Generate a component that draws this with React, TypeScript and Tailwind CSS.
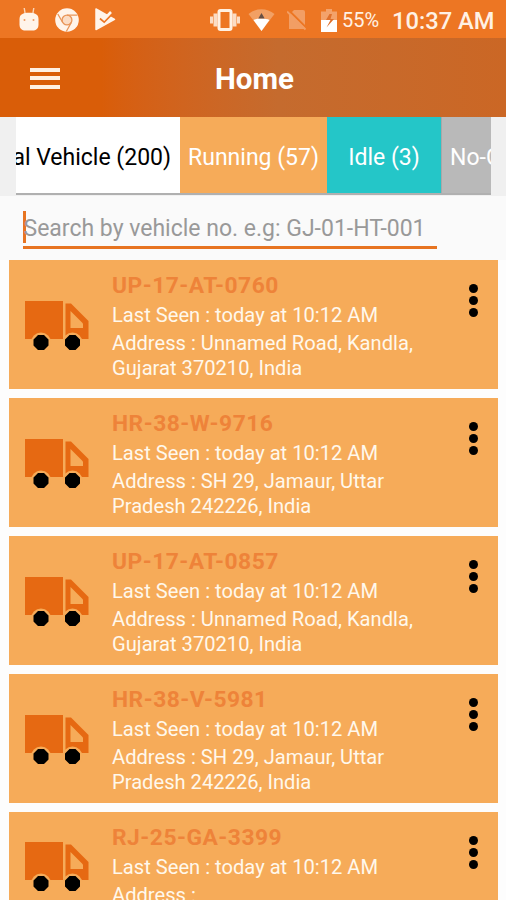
type Vehicle = { id: string; address: string[] };

const vehicles: Vehicle[] = [
  { id: "UP-17-AT-0760", address: ["Address : Unnamed Road, Kandla,", "Gujarat 370210, India"] },
  { id: "HR-38-W-9716", address: ["Address : SH 29, Jamaur, Uttar", "Pradesh 242226, India"] },
  { id: "UP-17-AT-0857", address: ["Address : Unnamed Road, Kandla,", "Gujarat 370210, India"] },
  { id: "HR-38-V-5981", address: ["Address : SH 29, Jamaur, Uttar", "Pradesh 242226, India"] },
  { id: "RJ-25-GA-3399", address: ["Address :"] },
];

function AndroidIcon() {
  return (
    <svg width="20" height="24" viewBox="0 0 20 24" className="ml-[19px] shrink-0" fill="#fff4ea">
      <path d="M5.200 0 6.200 6M14.800 0 13.800 6" stroke="#fbd5b7" strokeWidth="1.400" />
      <path d="M.5 11C.5 6.500 4 4.800 10 4.800S19.500 6.500 19.500 11v5.500c0 4-2.500 6-6 6h-7c-3.500 0-6-2-6-6z" />
      <circle cx="5.500" cy="12" r="1" fill="#ed9a62" />
      <circle cx="14.500" cy="12" r="1" fill="#ed9a62" />
    </svg>
  );
}

function ChromeIcon() {
  return (
    <svg width="24" height="24" viewBox="0 0 24 24" className="ml-4 shrink-0">
      <circle cx="12" cy="12" r="11.800" fill="#fff4ea" />
      <circle cx="12" cy="12" r="4.900" fill="#fbdcc4" stroke="#e99558" strokeWidth="1.300" />
      <path d="M12 7.100h10.500M7.700 14.500 2.800 6M16.300 14.500 11.300 23.500" stroke="#e99558" strokeWidth="1.300" fill="none" />
    </svg>
  );
}

function PlayCheckIcon() {
  return (
    <svg width="21" height="23" viewBox="0 0 21 23" className="ml-4 shrink-0">
      <path d="M1 1 19.500 11.300 1 21.500z" fill="#fff4ea" stroke="#fff4ea" strokeWidth="1.500" strokeLinejoin="round" />
      <path d="m5 10.500 4.200 3.500L19 4" fill="none" stroke="#ed7623" strokeWidth="2" />
      <path d="m6 8 3.200 3.200L16 4" fill="none" stroke="#fff4ea" strokeWidth="2.600" />
    </svg>
  );
}

function VibrateIcon() {
  return (
    <svg width="30" height="24" viewBox="0 0 30 24" className="ml-[95px] shrink-0">
      <path d="M0 8.500h3v7H0zM3.500 5.500h4v13h-4zM22.500 5.500h4v13h-4zM27 8.500h3v7h-3z" fill="#fbdcc4" />
      <rect x="9" y="2.500" width="12" height="19" rx="1.500" fill="#ed7623" stroke="#fff0e2" strokeWidth="3" />
    </svg>
  );
}

function WifiIcon() {
  return (
    <svg width="27" height="23" viewBox="0 0 27 23" className="ml-[38px] shrink-0">
      <path d="M.5 5C8-1.400 19-1.400 26.500 5L13.500 22z" fill="#f2a064" />
      <path d="M5.500 11c4-2 12-2 16 0L13.500 22z" fill="#fff" />
      <path d="m13.500 4 3.200 5.500h-6.400z" fill="#685044" />
    </svg>
  );
}

function NoSimIcon() {
  return (
    <svg width="20" height="22" viewBox="0 0 20 22" className="ml-3 shrink-0">
      <path d="M7 1h9q2 0 2 2v17H2V6z" fill="#f29e64" />
      <path d="m1.500 1 18 18" stroke="#ed7623" strokeWidth="2" />
      <path d="m0 2.500 18.500 18" stroke="#f29e64" strokeWidth="1.800" />
    </svg>
  );
}

function BatteryIcon() {
  return (
    <svg width="16" height="23" viewBox="0 0 16 23" className="ml-[14px] shrink-0">
      <path d="M5 0h6v2.500h5V12H0V2.500h5z" fill="#f3a26b" />
      <path d="M0 11h16v12H0z" fill="#fff" />
      <path d="M8.500 5 5 11h4.500L5.500 18.500 13 10H9.500L11 5z" fill="#df702b" />
    </svg>
  );
}

function StatusBar() {
  return (
    <header className="flex h-[38px] bg-[#ed7623] text-[#fff1e4]">
      <div className="flex h-[39px] w-[210px] shrink-0 items-center">
        <AndroidIcon />
        <ChromeIcon />
        <PlayCheckIcon />
      </div>
      <div className="-ml-[95px] flex h-[40px] shrink-0 items-center">
        <VibrateIcon />
        <div className="-ml-[30px] flex items-center">
          <WifiIcon />
          <NoSimIcon />
          <BatteryIcon />
        </div>
      </div>
      <span className="ml-[5px] w-[50px] shrink-0 text-[20px] leading-[40px] whitespace-nowrap">55%</span>
      <span className="text-[23.7px] leading-[43px] font-medium whitespace-nowrap">10:37 AM</span>
    </header>
  );
}

function Toolbar() {
  return (
    <div className="flex h-[79px] items-center bg-linear-to-r from-[#d95d08] from-20% via-[#c56b2e] via-55% to-[#cb6725] pt-px">
      <div className="ml-[30px] flex w-[185px] shrink-0 flex-col gap-[4.500px]">
        <span className="h-1 w-[30px] bg-[#fff0e2]" />
        <span className="h-1 w-[30px] bg-[#fff0e2]" />
        <span className="h-1 w-[30px] bg-[#fff0e2]" />
      </div>
      <h1 className="pt-[2px] text-[29.500px] leading-8 font-bold text-white">Home</h1>
    </div>
  );
}

function Tabs() {
  return (
    <nav className="flex h-[79px] bg-[#f0f0f0] px-4 text-[23px] leading-[81px] whitespace-nowrap text-white">
      <div className="flex h-[78px] w-[475px] shrink-0 overflow-hidden border-b-2 border-[#b0b0b0]">
        <div className="flex w-[164px] shrink-0 justify-end overflow-hidden bg-white pr-[9px] text-black">Total Vehicle (200)</div>
        <div className="w-[147px] shrink-0 bg-[#f6ab59] text-center">Running (57)</div>
        <div className="w-[114px] shrink-0 bg-[#24c6c8] text-center">Idle (3)</div>
        <div className="w-[130px] shrink-0 border-l border-[#a8a8a8] bg-[#b9b9b9] pl-2">No-Comm</div>
      </div>
    </nav>
  );
}

function SearchField() {
  return (
    <div className="h-[64px] bg-[#fafafa] pt-[13px] pl-[23px]">
      <div className="flex h-[40px] w-[414px] border-b-[3px] border-[#e77421] text-[23px] leading-[40px] whitespace-nowrap text-[#999]">
        <span className="mt-[2px] h-[32px] w-[2.500px] shrink-0 bg-[#e77421]" />
        <span className="-ml-[2px]">Search by vehicle no. e.g: GJ-01-HT-001</span>
      </div>
    </div>
  );
}

function TruckIcon() {
  return (
    <svg width="64" height="52" viewBox="0 0 64 52" className="shrink-0">
      <path d="M0 1h38v38H0zM40.500 3.500H46L63.500 21v18h-23z" fill="#e66912" />
      <path d="M45.500 11 58 23.500v4.500H45.500z" fill="#f6ab59" />
      <circle cx="16" cy="42.500" r="10" fill="#f6ab59" />
      <circle cx="47.500" cy="42.500" r="10" fill="#f6ab59" />
      <path d="M13 35h6l4.500 4.500v6L19 50h-6l-4.500-4.500v-6zM44.500 35h6l4.500 4.500v6L50.500 50h-6L40 45.500v-6z" />
    </svg>
  );
}

function VehicleCard({ vehicle }: { vehicle: Vehicle }) {
  const height = vehicle.address.length > 1 ? "h-[129px]" : "h-[107px]";
  return (
    <article className={`flex shrink-0 bg-[#f6ab59] ${height}`}>
      <div className="flex w-[103px] shrink-0 items-center pt-[3px] pl-4"><TruckIcon /></div>
      <div className="w-[357px] shrink-0 pt-[13px] whitespace-nowrap text-[#fff8ec]">
        <h2 className="text-[22.800px] leading-[26px] font-bold tracking-[0.5px] text-[#ee8339]">{vehicle.id}</h2>
        <p className="mt-[4px] text-[20.150px] leading-6">Last Seen : today at 10:12 AM</p>
        <div className="mt-[4px] text-[20.150px] leading-[24.500px]">
          {vehicle.address.map((line) => <p key={line}>{line}</p>)}
        </div>
      </div>
      <div className="mt-[24px] flex flex-col gap-[3px]">
        <span className="size-[9px] rounded-full bg-black" />
        <span className="size-[9px] rounded-full bg-black" />
        <span className="size-[9px] rounded-full bg-black" />
      </div>
    </article>
  );
}

export default function App() {
  return (
    <div className="h-[900px] w-[506px] overflow-hidden bg-[#fdfdfd] font-[Roboto,sans-serif]">
      <StatusBar />
      <Toolbar />
      <Tabs />
      <SearchField />
      <main className="flex flex-col gap-[9px] pr-2 pl-[9px]">
        {vehicles.map((vehicle) => <VehicleCard key={vehicle.id} vehicle={vehicle} />)}
      </main>
    </div>
  );
}
